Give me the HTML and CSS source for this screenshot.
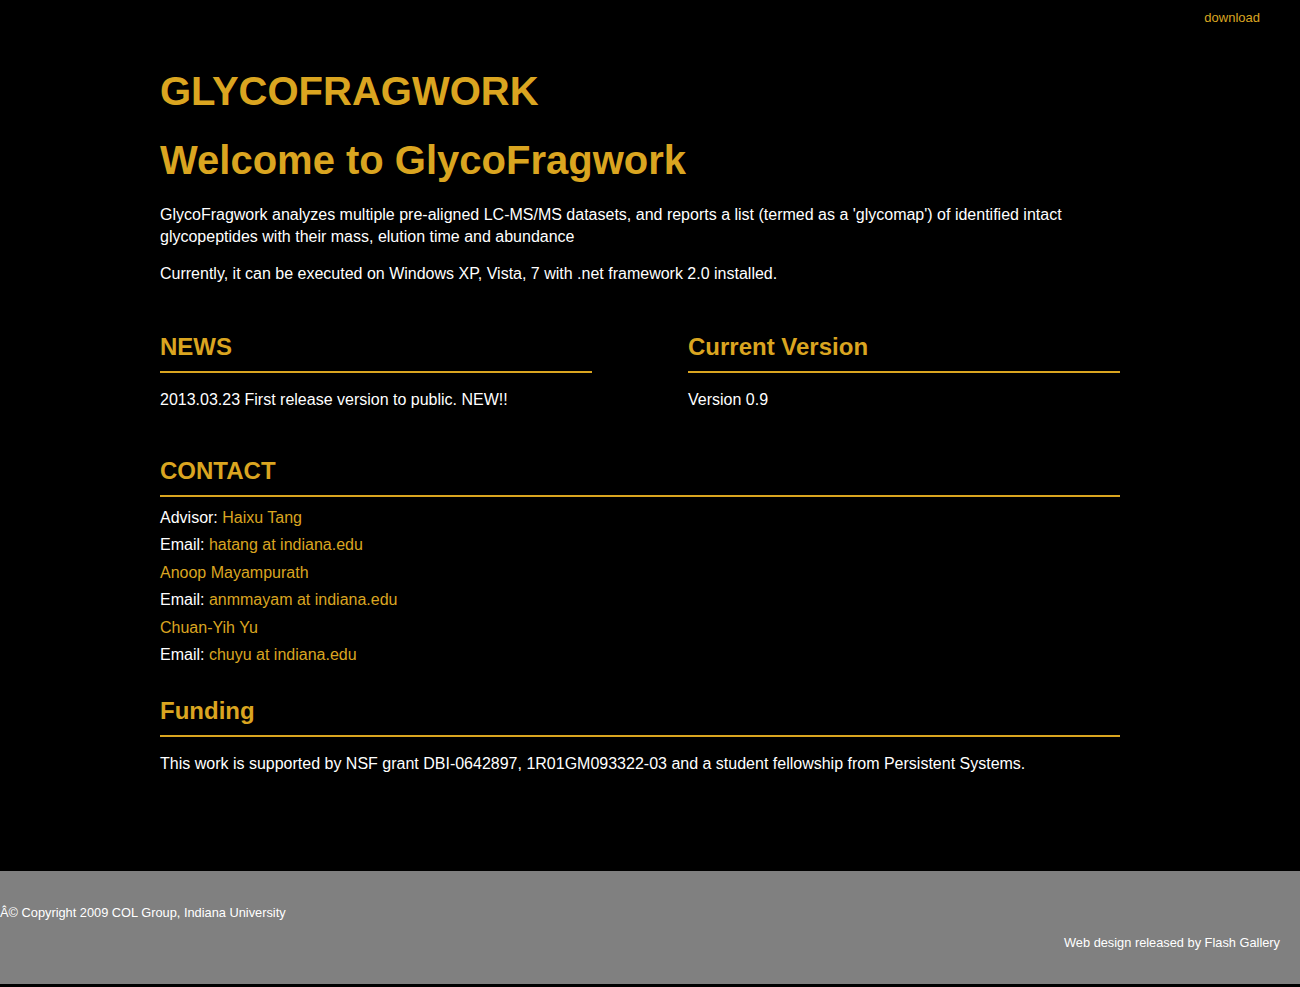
FILE: index.html
```html
<!DOCTYPE html>
<html>
<head>
<meta charset="utf-8">
<title>GlycoFragwork</title>
<link rel="stylesheet" href="styles.css">
</head>
<body>
<div class="topbar"><a class="gold" href="#">download</a></div>
<div class="container">
  <h1 class="logo">GLYCOFRAGWORK</h1>
  <h2 class="welcome">Welcome to GlycoFragwork</h2>
  <p class="intro">GlycoFragwork analyzes multiple pre-aligned LC-MS/MS datasets, and reports a list (termed as a 'glycomap') of identified intact glycopeptides with their mass, elution time and abundance</p>
  <p class="intro">Currently, it can be executed on Windows XP, Vista, 7 with .net framework 2.0 installed.</p>
  <div class="cols">
    <section class="col">
      <h3 class="sec">NEWS</h3>
      <p class="txt">2013.03.23 First release version to public. NEW!!</p>
    </section>
    <section class="col">
      <h3 class="sec">Current Version</h3>
      <p class="txt">Version 0.9</p>
    </section>
  </div>
  <section class="block">
    <h3 class="sec">CONTACT</h3>
    <ul class="contacts">
      <li>Advisor: <a class="gold" href="#">Haixu Tang</a></li>
      <li>Email: <a class="gold" href="#">hatang at indiana.edu</a></li>
      <li><a class="gold" href="#">Anoop Mayampurath</a></li>
      <li>Email: <a class="gold" href="#">anmmayam at indiana.edu</a></li>
      <li><a class="gold" href="#">Chuan-Yih Yu</a></li>
      <li>Email: <a class="gold" href="#">chuyu at indiana.edu</a></li>
    </ul>
  </section>
  <section class="block funding">
    <h3 class="sec">Funding</h3>
    <p class="txt">This work is supported by NSF grant DBI-0642897, 1R01GM093322-03 and a student fellowship from Persistent Systems.</p>
  </section>
</div>
<footer class="footer">
  <div class="copy">Â© Copyright 2009 COL Group, Indiana University</div>
  <div class="credit">Web design released by Flash Gallery</div>
</footer>
</body>
</html>
```
FILE: styles.css
```css
html, body {
  margin: 0;
  padding: 0;
  background: #000;
  color: #fff;
  font-family: "Liberation Sans", Arial, sans-serif;
}
.gold {
  color: #daa520;
  text-decoration: none;
}
.topbar {
  display: flex;
  justify-content: flex-end;
  padding: 10px 40px 0 0;
  height: 20px;
  font-size: 13px;
  line-height: 16px;
}
.container {
  width: 960px;
  padding-right: 20px;
  margin: 0 auto;
  padding-bottom: 96px;
}
.logo {
  margin: 38px 0 0;
  font-size: 40px;
  line-height: 46px;
  color: #daa520;
}
.welcome {
  margin: 21px 0 0;
  font-size: 40px;
  line-height: 50px;
  color: #daa520;
}
.intro {
  margin: 19px 0 0;
  font-size: 16px;
  line-height: 22px;
}
.intro + .intro {
  margin-top: 15px;
}
.cols {
  display: flex;
  gap: 96px;
  margin-top: 47px;
}
.col {
  flex: 1;
}
.sec {
  margin: 0;
  font-size: 24px;
  line-height: 30px;
  color: #daa520;
  padding-bottom: 9px;
  border-bottom: 2px solid #daa520;
}
.txt {
  margin: 16px 0 0;
  font-size: 16px;
  line-height: 22px;
}
.block {
  margin-top: 45px;
}
.block.funding {
  margin-top: 28px;
}
.contacts {
  list-style: none;
  margin: 7px 0 0;
  padding: 0;
  font-size: 16px;
  line-height: 27.4px;
}
.footer {
  background: #808080;
  height: 113px;
  border-bottom: 3px solid #000;
  font-size: 12.8px;
  line-height: 16px;
  color: #fff;
  display: flex;
  flex-direction: column;
}
.copy {
  margin-top: 34px;
}
.credit {
  margin-top: 14px;
  align-self: flex-end;
  padding-right: 20px;
}
```
